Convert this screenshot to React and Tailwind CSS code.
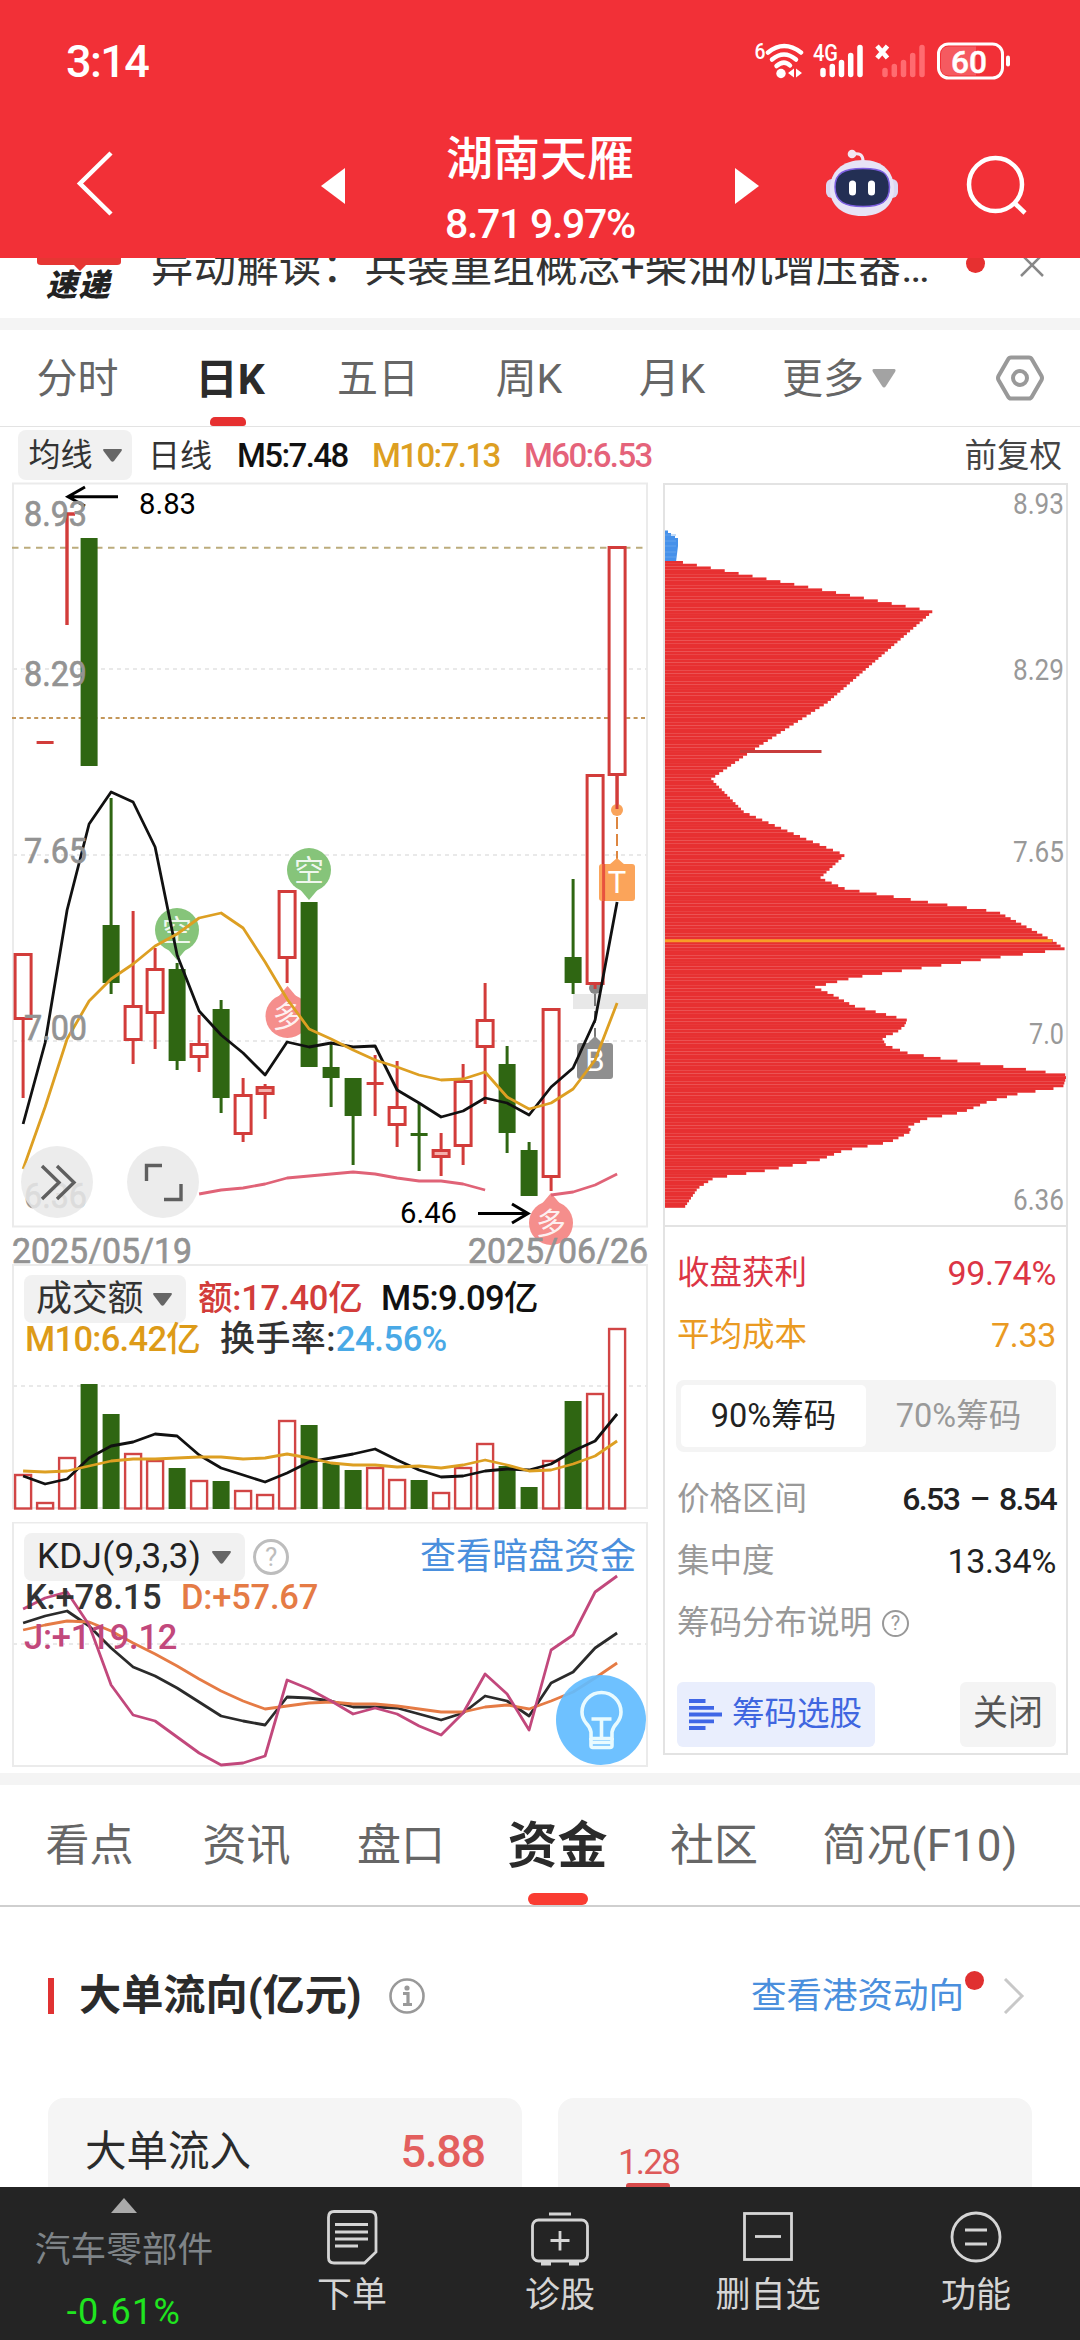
// App.jsx - Stock detail page: K line, volume, KDJ and chip distribution
import React from 'react';

const FONT = "font-[Roboto,'Noto_Sans_CJK_SC',sans-serif]";

// x centre of the n-th trading day
const dayX = (i) => 23.1 + 22 * i;

const toPoints = (values, start = 0) =>
  values.map((y, i) => `${dayX(i + start)},${y}`).join(' ');

// [day, bodyTop, bodyBottom, wickTop, wickBottom, up]
const candles = [
  [0, 954, 1018, 954, 1098, true],
  [1, 741, 744, 741, 744, true],
  [3, 538, 766, 538, 766, false],
  [4, 925, 983, 798, 994, false],
  [5, 1006, 1039, 911, 1064, true],
  [6, 969, 1012, 948, 1049, true],
  [7, 969, 1061, 963, 1070, false],
  [8, 1044, 1056, 1015, 1072, true],
  [9, 1009, 1098, 1000, 1113, false],
  [10, 1095, 1133, 1078, 1142, true],
  [11, 1087, 1093, 1084, 1119, true],
  [12, 891, 957, 891, 983, true],
  [13, 902, 1067, 902, 1067, false],
  [14, 1067, 1078, 1044, 1107, false],
  [15, 1078, 1116, 1078, 1165, false],
  [16, 1082, 1085, 1055, 1116, true],
  [17, 1107, 1124, 1061, 1147, true],
  [18, 1133, 1136, 1103, 1171, false],
  [19, 1150, 1156, 1133, 1176, true],
  [20, 1081, 1145, 1064, 1165, true],
  [21, 1020, 1046, 983, 1104, true],
  [22, 1064, 1133, 1046, 1153, false],
  [23, 1150, 1196, 1142, 1196, false],
  [24, 1009, 1176, 1009, 1191, true],
  [25, 957, 983, 879, 994, false],
  [26, 775, 983, 775, 989, true],
  [27, 547, 774, 547, 810, true],
];

const ma5 = [
  1124, 1043, 910, 824, 792, 802, 847, 955, 1011, 1035, 1053, 1075, 1042, 1047,
  1043, 1047, 1046, 1090, 1103, 1117, 1111, 1098, 1103, 1115, 1087, 1068, 1020, 902,
];
const ma10 = [
  1169, 1107, 1039, 1001, 979, 964, 946, 934, 918, 913, 928, 962, 999, 1029,
  1039, 1050, 1060, 1067, 1075, 1080, 1079, 1072, 1097, 1109, 1103, 1089, 1060, 1003,
];
const ma60Left = [1194, 1190, 1188, 1184, 1178, 1176, 1174, 1172, 1174, 1178, 1181, 1181, 1184, 1190];
const ma60Right = [1195, 1192, 1185, 1174];

// [top, up]
const volumes = [
  [1474, true], [1502, true], [1457, true], [1384, false], [1414, false], [1453, true], [1460, true],
  [1468, false], [1480, true], [1481, false], [1490, true], [1494, true], [1420, true], [1425, false],
  [1463, false], [1470, false], [1467, true], [1479, true], [1480, false], [1492, true], [1467, true],
  [1443, true], [1466, false], [1487, false], [1460, true], [1401, false], [1393, true], [1328, true],
];
const vol5 = [
  1476, 1484, 1479, 1458, 1446, 1442, 1434, 1436, 1455, 1468, 1475, 1482, 1473, 1462,
  1458, 1454, 1449, 1460, 1470, 1477, 1476, 1471, 1469, 1470, 1464, 1451, 1441, 1414,
];
const vol10 = [
  1471, 1472, 1471, 1466, 1461, 1459, 1459, 1458, 1457, 1457, 1459, 1458, 1454, 1458,
  1463, 1465, 1465, 1467, 1466, 1468, 1465, 1460, 1465, 1471, 1470, 1464, 1456, 1441,
];

const kLine = [
  1623, 1616, 1611, 1626, 1648, 1667, 1676, 1688, 1702, 1716, 1721, 1725, 1697, 1698,
  1701, 1707, 1707, 1708, 1714, 1720, 1713, 1696, 1701, 1716, 1683, 1672, 1648, 1633,
];
const dLine = [
  1630, 1625, 1621, 1622, 1631, 1643, 1654, 1666, 1679, 1691, 1701, 1709, 1706, 1703,
  1702, 1704, 1704, 1706, 1709, 1712, 1712, 1707, 1705, 1709, 1701, 1692, 1678, 1663,
];
const jLine = [
  1609, 1598, 1592, 1625, 1685, 1715, 1721, 1737, 1753, 1765, 1763, 1756, 1680, 1689,
  1701, 1714, 1708, 1714, 1726, 1735, 1713, 1674, 1694, 1730, 1650, 1635, 1592, 1576,
];

// outline of the chip distribution as [y, x]
const chipOutline = [
  [561, 676], [611.5, 932.5], [703, 826.7], [748, 756], [779, 711], [812, 744], [839, 806],
  [855, 845], [878, 820], [889, 846], [902, 927], [912, 998], [940, 1052], [949, 1065], [957, 1000],
  [977, 856], [987, 815], [995, 833], [1006, 854], [1020, 907], [1025, 905], [1032, 897],
  [1038, 882], [1045, 886], [1053, 908], [1061, 957], [1069, 1024], [1075, 1067], [1087, 1063],
  [1094, 1017], [1102, 987], [1112, 963], [1119, 925], [1127, 908], [1131, 912], [1142, 890],
  [1150, 845], [1160, 819], [1171, 763], [1178, 714], [1188, 698], [1208, 684],
];

const chipBars = [];
for (let y = 561; y < 1207; y += 2.74) {
  const mid = y + 1.37;
  const n = chipOutline.findIndex((p) => p[0] > mid);
  if (n < 1) continue;
  const [y0, x0] = chipOutline[n - 1];
  const [y1, x1] = chipOutline[n];
  chipBars.push({ y, w: x0 + ((x1 - x0) * (mid - y0)) / (y1 - y0) - 664 });
}

const Line = ({ points, color, width = 2.8 }) => (
  <polyline points={points} fill="none" stroke={color} strokeWidth={width} strokeLinejoin="round" />
);

const Candle = ({ data }) => {
  const [day, top, bottom, wickTop, wickBottom, up] = data;
  const x = dayX(day);
  const flat = bottom - top < 4;
  const color = up ? '#d23c3a' : '#2f6612';
  return (
    <g>
      {wickTop < top && <line x1={x} x2={x} y1={wickTop} y2={top} stroke={color} strokeWidth="3" />}
      {wickBottom > bottom && (
        <line x1={x} x2={x} y1={bottom} y2={wickBottom} stroke={color} strokeWidth="3" />
      )}
      {up && !flat ? (
        <rect
          x={x - 8}
          y={top + 0.5}
          width="16"
          height={bottom - top}
          fill={bottom - top < 8 ? '#f3b0ac' : '#fff'}
          stroke={color}
          strokeWidth="3"
        />
      ) : (
        <rect x={x - 8.5} y={top} width="17" height={bottom - top} fill={color} />
      )}
    </g>
  );
};

const Pin = ({ x, y, label, down }) => (
  <g>
    <g fill={down ? '#86c47a' : '#f58e8c'}>
      <circle cx={x} cy={y} r="22" />
      {down ? (
        <path d={`M${x - 11} ${y + 17}L${x} ${y + 30}L${x + 11} ${y + 17}Z`} />
      ) : (
        <path d={`M${x - 11} ${y - 17}L${x} ${y - 30}L${x + 11} ${y - 17}Z`} />
      )}
    </g>
    <text x={x} y={y + 11} textAnchor="middle" fontSize="30" fill="#fff" fillOpacity="0.9">
      {label}
    </text>
  </g>
);

const KLineChart = () => (
  <svg className="block w-[640px] h-[782px]" viewBox="10 482 640 782">
    <rect x="13" y="483.5" width="634" height="743" fill="none" stroke="#ebebeb" strokeWidth="2" />
    {[669, 855, 1041].map((y) => (
      <line key={y} x1="13" x2="647" y1={y} y2={y} stroke="#e9e9e9" strokeWidth="2" strokeDasharray="4 4" />
    ))}
    <line x1="12" x2="644" y1="547.7" y2="547.7" stroke="#bcac7c" strokeWidth="2" strokeDasharray="6.5 5.5" />
    <line x1="12" x2="648" y1="718" y2="718" stroke="#c4975a" strokeWidth="2" strokeDasharray="4 3.4" />
    <rect x="573" y="994" width="75" height="15" fill="#e8e8e8" />
    <Pin x={177} y={930} label="空" down />
    <Pin x={309} y={870} label="空" down />
    <Pin x={287.5} y={1016} label="多" />
    <Pin x={551} y={1223} label="多" />

    {/* buy mark */}
    <circle cx="595" cy="988" r="6" fill="#888" />
    <path d="M595 994V1038" stroke="#777" strokeWidth="2" strokeDasharray="12 5" />
    <path d="M588 1043L595 1036L602 1043Z" fill="#8f8f8f" />
    <rect x="577" y="1043" width="36" height="36" rx="3" fill="#8f8f8f" />
    <text x="595" y="1071" textAnchor="middle" fontSize="31" fill="#fff">B</text>

    {candles.map((c) => (
      <Candle key={c[0]} data={c} />
    ))}
    <path d="M75 514H67V625" fill="none" stroke="#d23c3a" strokeWidth="3.4" />

    {/* T mark */}
    <circle cx="617" cy="810" r="6" fill="#f9a35a" />
    <path d="M617 774V809" stroke="#d23c3a" strokeWidth="3" />
    <path d="M617 817V860" stroke="#dd8640" strokeWidth="2" strokeDasharray="12 5" />
    <path d="M609 865L617 858L625 865Z" fill="#fba45a" />
    <rect x="599" y="864" width="36" height="37" rx="3" fill="#fba45a" />
    <text x="617" y="893" textAnchor="middle" fontSize="31" fill="#fff">T</text>
    <path d="M603.6 864V901" stroke="#e8523e" strokeWidth="3" />

    <Line points={toPoints(ma60Left, 8)} color="#e06377" />
    <Line points={toPoints(ma60Right, 24)} color="#e06377" />
    <Line points={toPoints(ma5)} color="#111" />
    <Line points={toPoints(ma10)} color="#dd9f22" />

    {/* price extremes */}
    <g fill="none" stroke="#000" strokeWidth="3">
      <path d="M118 496.7H68M85 487L68 496.7L85 506" />
      <path d="M478 1213.5H528M512 1204L528 1213.5L512 1223" />
    </g>
    <g fontSize="30" fill="#000">
      <text x="139" y="514" textLength="57" lengthAdjust="spacingAndGlyphs">8.83</text>
      <text x="400" y="1223" textLength="57" lengthAdjust="spacingAndGlyphs">6.46</text>
    </g>
    <g fontSize="35" fill="#939393" stroke="#939393" strokeWidth="0.7">
      <text x="24" y="526" textLength="63" lengthAdjust="spacingAndGlyphs">8.93</text>
      <text x="24" y="686" textLength="63" lengthAdjust="spacingAndGlyphs">8.29</text>
      <text x="24" y="863" textLength="63" lengthAdjust="spacingAndGlyphs">7.65</text>
      <text x="24" y="1040" textLength="63" lengthAdjust="spacingAndGlyphs">7.00</text>
      <text x="24" y="1208" textLength="63" lengthAdjust="spacingAndGlyphs">6.36</text>
      <text x="12" y="1263" textLength="180" lengthAdjust="spacingAndGlyphs">2025/05/19</text>
      <text x="468" y="1263" textLength="180" lengthAdjust="spacingAndGlyphs">2025/06/26</text>
    </g>

    {/* round buttons */}
    <g fill="#e9e9e9" fillOpacity="0.85">
      <circle cx="57" cy="1182" r="36" />
      <circle cx="163" cy="1182" r="36" />
    </g>
    <g fill="none" stroke="#5f5f5f" strokeWidth="3.4">
      <path d="M42 1166L59 1182.5L42 1199M57 1166L74 1182.5L57 1199" />
      <path d="M146.5 1181V1165.5H162M181 1184V1199.5H164" />
    </g>
  </svg>
);

const ChipChart = () => (
  <svg className="block w-[408px] h-[742px]" viewBox="662 483 408 742">
    <path d="M664 530.5H668V533H671V536H675V538H678V546L676 562H664Z" fill="#4691ea" />
    {[535, 541, 546, 552, 557].map((y) => (
      <line key={y} x1="664" x2="676" y1={y} y2={y} stroke="#6aa7ee" strokeWidth="0.8" />
    ))}
    {chipBars.map((b) => (
      <rect key={b.y} x="664" y={b.y} width={b.w} height="2.9" fill="#e73031" />
    ))}
    <line x1="740" x2="821.5" y1="751.5" y2="751.5" stroke="#c83c3c" strokeWidth="2.8" />
    <line x1="664" x2="1052" y1="940.7" y2="940.7" stroke="#f79d27" strokeWidth="3" />
    <g fontSize="29" fill="#999">
      <text x="1013" y="514" textLength="51" lengthAdjust="spacingAndGlyphs">8.93</text>
      <text x="1013" y="680" textLength="51" lengthAdjust="spacingAndGlyphs">8.29</text>
      <text x="1013" y="862" textLength="51" lengthAdjust="spacingAndGlyphs">7.65</text>
      <text x="1029" y="1044" textLength="35" lengthAdjust="spacingAndGlyphs">7.0</text>
      <text x="1013" y="1210" textLength="51" lengthAdjust="spacingAndGlyphs">6.36</text>
    </g>
  </svg>
);

const Triangle = () => (
  <svg className="w-[19px] h-[13px]" viewBox="0 0 19 13">
    <path d="M1 0H18Q19.5 0 18.5 2L11 12Q9.5 13.5 8 12L0.5 2Q-0.5 0 1 0Z" fill="#666" />
  </svg>
);

const StatusBar = () => (
  <div className="h-[120px] flex items-center justify-between pl-[66px] pr-[69px] pt-[2px]">
    <span className="text-[45px] leading-none font-medium tracking-[-1.6px]">3:14</span>
    <svg className="w-[258px] h-[42px]" viewBox="752 38.5 258 42" fill="none">
      <text x="753.5" y="57" fontSize="22" fontWeight="500" fill="#fff" textLength="11" lengthAdjust="spacingAndGlyphs">6</text>
      <g stroke="#fff" strokeWidth="4.5" strokeLinecap="round">
        <path d="M767 51Q783 38 800 51" />
        <path d="M771 58Q783 48 795 58" />
        <path d="M775.5 64.5Q783 58 789 64" />
      </g>
      <circle cx="780" cy="72" r="4.7" fill="#fff" />
      <path d="M793 67V76L787 71.5ZM795 67V76L801 71.5Z" fill="#fff" />
      <text x="812" y="59" fontSize="23" fontWeight="500" fill="#fff" textLength="25" lengthAdjust="spacingAndGlyphs">4G</text>
      <g stroke="#fff" strokeWidth="5.5" strokeLinecap="round">
        <path d="M822 69V73M831.3 65V73M840.5 61V73M849.7 54V73M859 46V73" />
      </g>
      <path d="M876 44.5L886.5 56.5M886.5 44.5L876 56.5" stroke="#fff" strokeWidth="4.6" />
      <g stroke="#ff6b70" strokeWidth="5.5" strokeLinecap="round">
        <path d="M884 69V73M893.3 65V73M902.5 61V73M911.7 54V73M921 46V73" />
      </g>
      <rect x="937.5" y="42.5" width="64" height="34" rx="10" stroke="#fff" strokeWidth="3" />
      <path d="M948 45H975V74H948Q940 74 940 66V53Q940 45 948 45Z" fill="#f55a60" />
      <text x="950" y="71" fontSize="32" fontWeight="500" fill="#fff" stroke="#fff" strokeWidth="0.5" textLength="36" lengthAdjust="spacingAndGlyphs">60</text>
      <path d="M1007 56V63" stroke="#fff" strokeWidth="4" strokeLinecap="round" />
    </svg>
  </div>
);

const RobotIcon = () => (
  <svg className="w-[74px] h-[70px]" viewBox="824 148 74 70">
    <path d="M852 154Q862 152 862 161" fill="none" stroke="#f3e6f2" strokeWidth="3" />
    <circle cx="851" cy="154" r="4.3" fill="#f3e6f2" />
    <rect x="825" y="179" width="12" height="19" rx="6" fill="#dcd8f2" />
    <rect x="885" y="179" width="12" height="19" rx="6" fill="#dcd8f2" />
    <path d="M862 160C882 160 893 172 893 189C893 206 880 216 861 216C842 216 829 206 829 189C829 172 841 160 862 160Z" fill="#e7e3f6" />
    <path d="M862 168.5C882 168.5 888 173 888.5 187C888.5 202 880 206.5 862 206.5C844 206.5 834 202 834 187C834 173 843 168.5 862 168.5Z" fill="#232f54" stroke="#7d5fe0" strokeWidth="1.5" />
    <rect x="848" y="180.5" width="7" height="15" rx="3.5" fill="#fff" />
    <rect x="867" y="180.5" width="7" height="15" rx="3.5" fill="#fff" />
  </svg>
);

const Header = () => (
  <header className="h-[258px] bg-[#f23037] text-white">
    <StatusBar />
    <div className="h-[138px] flex items-start">
      <svg className="w-[40px] h-[66px] mt-[30px] ml-[75px]" viewBox="0 0 40 66">
        <path d="M36 3L5 33.5L36 64" fill="none" stroke="#fff" strokeWidth="4.5" />
      </svg>
      <svg className="w-[24px] h-[36px] mt-[48px] ml-[206px]" viewBox="0 0 24 36">
        <path d="M24 0V36L0 18Z" fill="#fff" />
      </svg>
      <div className="w-[390px] flex flex-col items-center">
        <h1 className="text-[47px] leading-[54px] mt-[12px] font-medium">湖南天雁</h1>
        <p className="text-[41px] leading-[48px] mt-[14px] font-medium tracking-[-1.3px]">8.71 9.97%</p>
      </div>
      <svg className="w-[24px] h-[36px] mt-[48px]" viewBox="0 0 24 36">
        <path d="M0 0V36L24 18Z" fill="#fff" />
      </svg>
      <div className="mt-[28px] ml-[66px]">
        <RobotIcon />
      </div>
      <svg className="w-[62px] h-[62px] mt-[35px] ml-[66px]" viewBox="964 155 62 62">
        <circle cx="994.5" cy="184.5" r="26.5" fill="none" stroke="#fff" strokeWidth="4.5" />
        <path d="M1013.5 203L1024 213" stroke="#fff" strokeWidth="4.5" />
      </svg>
    </div>
  </header>
);

const NewsStrip = () => (
  <div className="h-[60px] flex overflow-hidden bg-white">
    <div className="ml-[37px] w-[84px]">
      <svg className="block w-[84px] h-[13px]" viewBox="0 0 84 13">
        <path d="M0 0H84V4Q84 7 80 7H49L43 13L37 7H4Q0 7 0 4Z" fill="#e63633" />
      </svg>
      <p className="-mt-[1px] pl-[9px] text-[31px] leading-[32px] font-black italic text-[#222] tracking-[1.5px]">速递</p>
    </div>
    <p className="-mt-[20px] ml-[30px] w-[784px] h-[60px] text-[42.3px] leading-[60px] text-[#333] tracking-[0.4px] whitespace-nowrap">
      异动解读：兵装重组概念+柴油机增压器…
    </p>
    <div className="size-[19px] rounded-full bg-[#e63030] -mt-[4px] ml-[31px]" />
    <svg className="w-[24px] h-[24px] ml-[35px] -mt-[5px]" viewBox="0 0 24 24">
      <path d="M1 1L23 23M23 1L1 23" stroke="#888" strokeWidth="2.5" />
    </svg>
  </div>
);

const PeriodTabs = () => (
  <nav className="h-[97px] grid grid-cols-[155px_150px_146px_156px_130px_204px_1fr] items-center text-[41px] text-[#666] border-b border-[#e3e3e3] bg-white">
    <span className="pt-[4px] text-center">分时</span>
    <span className="relative h-full pt-[4px] flex items-center justify-center text-[42.5px] font-bold text-[#2b2b2b]">
      日K
      <i className="absolute bottom-0 left-[55px] w-[36px] h-[9px] rounded-t-[5px] rounded-b-[3px] bg-[#e63030]" />
    </span>
    <span className="pt-[4px] text-center">五日</span>
    <span className="pt-[4px] text-center">周K</span>
    <span className="pt-[4px] text-center">月K</span>
    <span className="pt-[4px] flex items-center justify-center gap-[8px]">
      更多
      <svg className="w-[24px] h-[19px] -mt-[4px]" viewBox="0 0 24 19">
        <path d="M2 0H22Q24.5 0 23 3L14 17Q12 20 10 17L1 3Q-0.5 0 2 0Z" fill="#a3a3a3" />
      </svg>
    </span>
    <svg className="w-[50px] h-[48px] ml-[54px]" viewBox="0 0 50 48" fill="none" stroke="#999">
      <path d="M16 3.5H34Q36 3.5 37 5.5L46.5 22Q47.5 24 46.5 26L37 42.5Q36 44.5 34 44.5H16Q14 44.5 13 42.5L3.5 26Q2.5 24 3.5 22L13 5.5Q14 3.5 16 3.5Z" strokeWidth="4" />
      <circle cx="25" cy="24" r="7" strokeWidth="4" />
    </svg>
  </nav>
);

const AverageRow = () => (
  <div className="h-[56px] flex items-start pt-[3px] leading-[52px] text-[33px] font-medium tracking-[-1.6px]">
    <button className="ml-[18px] w-[114px] h-[50px] rounded-lg bg-[#f1f1f1] flex items-center justify-center gap-[10px] text-[32px] font-normal text-[#333] tracking-normal">
      均线 <Triangle />
    </button>
    <span className="ml-[16px] w-[89px] text-[32px] text-[#333] font-normal tracking-normal">日线</span>
    <span className="w-[135px] text-[#111]">M5:7.48</span>
    <span className="w-[152px] text-[#dd9f22]">M10:7.13</span>
    <span className="w-[140px] text-[#e5637a]">M60:6.53</span>
    <span className="ml-auto mr-[18px] text-[32.5px] font-normal text-[#444] tracking-normal">前复权</span>
  </div>
);

const VolumePanel = () => (
  <div className="relative w-[640px] h-[246px]">
    <svg className="absolute inset-0 w-[640px] h-[246px]" viewBox="10 1264 640 246">
      <rect x="13" y="1265" width="634" height="243" fill="none" stroke="#ebebeb" strokeWidth="2" />
      <line x1="13" x2="647" y1="1386" y2="1386" stroke="#e9e9e9" strokeWidth="2" strokeDasharray="4 4" />
      {volumes.map(([top, up], i) =>
        up ? (
          <rect key={i} x={dayX(i) - 8} y={top + 1} width="16" height={1507.5 - top} fill="#fff" stroke="#d14545" strokeWidth="2.4" />
        ) : (
          <rect key={i} x={dayX(i) - 8.5} y={top} width="17" height={1509 - top} fill="#2f6612" />
        )
      )}
      <Line points={toPoints(vol5)} color="#111" />
      <Line points={toPoints(vol10)} color="#dd9f22" />
    </svg>
    <div className="relative pt-[11px] text-[34.5px] font-medium whitespace-nowrap">
      <div className="flex items-center h-[48px]">
        <button className="ml-[14px] w-[162px] h-[48px] rounded-lg bg-[#f1f1f1] flex items-center pl-[12px] gap-[10px] text-[36px] font-normal text-[#333] tracking-[-0.2px]">
          成交额 <Triangle />
        </button>
        <span className="ml-[12px] w-[183px] text-[#d23c3a] tracking-[-0.2px]">额:17.40亿</span>
        <span className="text-[#111] tracking-[-0.6px]">M5:9.09亿</span>
      </div>
      <div className="-mt-[1px] flex items-center h-[36px] pl-[15px]">
        <span className="w-[195px] text-[#dd9b18] tracking-[-0.7px]">M10:6.42亿</span>
        <span className="text-[#333] text-[35px] tracking-[0.4px]">换手率:</span>
        <span className="text-[#49a9e6] tracking-[-0.4px]">24.56%</span>
      </div>
    </div>
  </div>
);

const KdjPanel = () => (
  <div className="relative w-[640px] h-[246px] mt-[12px]">
    <svg className="absolute inset-0 w-[640px] h-[246px]" viewBox="10 1522 640 246">
      <rect x="13" y="1522.5" width="634" height="243.5" fill="none" stroke="#ebebeb" strokeWidth="2" />
      <line x1="13" x2="647" y1="1644" y2="1644" stroke="#e9e9e9" strokeWidth="2" strokeDasharray="4 4" />
      <Line points={toPoints(kLine)} color="#2b2b2b" />
      <Line points={toPoints(dLine)} color="#e57b45" />
      <Line points={toPoints(jLine)} color="#c2487c" />
    </svg>
    <div className="relative pt-[11px] text-[34.5px] font-medium tracking-[-0.2px] whitespace-nowrap">
      <div className="flex items-center h-[48px]">
        <button className="ml-[14px] w-[221px] h-[48px] rounded-lg bg-[#f1f1f1] flex items-center pl-[13px] gap-[11px] text-[35px] font-normal text-[#222] tracking-[0.3px]">
          KDJ(9,3,3) <Triangle />
        </button>
        <span className="ml-[8px] size-[36px] rounded-full border-[3px] border-[#bdbdbd] text-[#bdbdbd] text-[26px] font-normal flex items-center justify-center">?</span>
        <span className="ml-auto mr-[14px] text-[36px] font-normal text-[#4a8fdd] tracking-normal">查看暗盘资金</span>
      </div>
      <div className="-mt-[1px] h-[40px] leading-[34px] pl-[15px] flex">
        <span className="w-[156px] text-[#333]">K:+78.15</span>
        <span className="text-[#e57b45]">D:+57.67</span>
      </div>
      <p className="h-[40px] leading-[34px] pl-[14px] text-[#c2487c]">J:+119.12</p>
    </div>
    <svg className="absolute left-[546px] top-[153px] size-[90px]" viewBox="0 0 90 90" fill="none">
      <circle cx="45" cy="45" r="45" fill="#62bcff" fillOpacity="0.92" />
      <g stroke="#e9fbff" strokeWidth="3.6">
        <path d="M35 63.5V57Q34 52 30 48Q26 43 26 37A19.5 19.5 0 0 1 65 37Q65 43 61 48Q57 52 56 57V63.5Z" />
        <path d="M35 63V70.5Q35 72.5 37 72.5H54Q56 72.5 56 70.5V63M35 67.5H56" />
        <path d="M35.5 44H55.5M45.5 44V63" />
      </g>
    </svg>
  </div>
);

const chipStats = [
  { label: '收盘获利', value: '99.74%', color: 'text-[#dc3545]' },
  { label: '平均成本', value: '7.33', color: 'text-[#ea9a22]' },
];

const ChipPanel = () => (
  <aside className="ml-auto mr-[12px] w-[405px] h-[1272px] border-2 border-[#e3e3e3] text-[32.5px]">
    <div className="h-[742px] border-b-2 border-[#e3e3e3] overflow-hidden">
      <div className="-ml-[3px] -mt-[2px]">
        <ChipChart />
      </div>
    </div>
    <div className="pl-[12px] pr-[10px] pt-[15px]">
      {chipStats.map((s) => (
        <div key={s.label} className={`h-[62px] flex items-center justify-between ${s.color}`}>
          <span>{s.label}</span>
          <span className="text-[34px] tracking-[-0.3px]">{s.value}</span>
        </div>
      ))}
      <div className="mt-[14px] -ml-[1px] h-[72px] rounded-[8px] bg-[#f4f4f4] p-[5px] flex text-[32.5px]">
        <span className="w-[185px] rounded-[5px] bg-white text-[#222] flex items-center justify-center pt-[1px]">90%筹码</span>
        <span className="flex-1 text-[#999] flex items-center justify-center pt-[1px]">70%筹码</span>
      </div>
      <div className="mt-[16px] h-[62px] flex items-center justify-between">
        <span className="text-[#999]">价格区间</span>
        <span className="text-[#222] font-medium text-[32px] tracking-[-1.6px] [word-spacing:4px]">6.53 – 8.54</span>
      </div>
      <div className="h-[62px] flex items-center justify-between">
        <span className="text-[#999]">集中度</span>
        <span className="text-[#222] text-[34px] tracking-[-0.3px]">13.34%</span>
      </div>
      <div className="h-[62px] flex items-center text-[#999]">
        筹码分布说明
        <span className="ml-[10px] size-[27px] rounded-full border-2 border-[#999] text-[20px] flex items-center justify-center">?</span>
      </div>
      <div className="mt-[28px] h-[65px] flex justify-between">
        <button className="w-[198px] rounded-[6px] bg-[#e9eefd] text-[#3f66e0] flex items-center pl-[12px] gap-[10px]">
          <svg className="w-[33px] h-[31px]" viewBox="0 0 33 31">
            <path d="M0 2H16.5M0 8.8H25M0 15.5H33M0 22.3H25M0 29H16.5" stroke="#3f66e6" strokeWidth="3.8" />
          </svg>
          筹码选股
        </button>
        <button className="w-[96px] rounded-[6px] bg-[#f4f4f4] text-[#555] text-[35px]">关闭</button>
      </div>
    </div>
  </aside>
);

const SectionTabs = () => (
  <nav className="h-[122px] grid grid-cols-[179px_135px_174px_139px_174px_238px] items-center text-center text-[44px] text-[#666] border-b-2 border-[#cfcfcf] bg-white">
    <span className="pt-[2px]">看点</span>
    <span className="pt-[2px]">资讯</span>
    <span className="pt-[2px]">盘口</span>
    <span className="relative h-full pt-[2px] flex items-center justify-center text-[50px] font-bold text-[#2b2b2b]">
      资金
      <i className="absolute bottom-0 left-[40px] w-[60px] h-[12px] rounded-[6px] bg-[#fa3c32]" />
    </span>
    <span className="pt-[2px]">社区</span>
    <span className="pt-[2px] whitespace-nowrap tracking-[0.5px]">简况(F10)</span>
  </nav>
);

const FundFlow = () => (
  <section className="h-[280px] bg-white overflow-hidden">
    <div className="h-[60px] mt-[59px] pl-[48px] flex items-center">
      <i className="w-[6px] h-[36px] bg-[#e03232]" />
      <h2 className="ml-[25px] text-[42.2px] leading-none font-bold text-[#2b2b2b]">大单流向(亿元)</h2>
      <svg className="ml-[27px] size-[36px]" viewBox="0 0 36 36" fill="none" stroke="#999">
        <circle cx="18" cy="18" r="16.5" strokeWidth="2.6" />
        <path d="M14 15.5H19V26M14 26.5H23" strokeWidth="3.2" />
        <circle cx="18" cy="10" r="1.3" strokeWidth="2.6" />
      </svg>
      <span className="ml-auto pt-[2px] text-[35.5px] text-[#4a8fdd]">查看港资动向</span>
      <i className="size-[19px] rounded-full bg-[#e03030] -mt-[32px] ml-[1px]" />
      <svg className="w-[22px] h-[36px] ml-[19px] mr-[55px]" viewBox="0 0 22 36">
        <path d="M2 1L19 18L2 35" fill="none" stroke="#c8c8c8" strokeWidth="3" />
      </svg>
    </div>
    <div className="mt-[72px] mx-[48px] h-[100px] grid grid-cols-2 gap-[36px]">
      <div className="rounded-t-[16px] bg-[#f5f5f5] flex justify-between pl-[37px] pr-[37px] leading-[107px]">
        <span className="text-[41.5px] text-[#2b2b2b]">大单流入</span>
        <span className="text-[45px] font-medium text-[#e35f5e] tracking-[-1.2px]">5.88</span>
      </div>
      <div className="rounded-t-[16px] bg-[#f5f5f5] pl-[60px] pt-[45px] text-[35px] leading-[40px] text-[#de5a5a] tracking-[-1.8px]">
        1.28
        <i className="block ml-[8px] w-[44px] h-[10px] rounded-[3px] bg-[#d84a4a]" />
      </div>
    </div>
  </section>
);

const actions = [
  {
    label: '下单',
    icon: (
      <>
        <path d="M9 2.5H45Q51 2.5 51 8.5V43L39.5 54H9Q3.5 54 3.5 48.5V8.5Q3.5 2.5 9 2.5Z" />
        <path d="M10 15.5H43M10 23H43M10 30H43M10 37H33" />
      </>
    ),
  },
  {
    label: '诊股',
    icon: (
      <>
        <rect x="-0.5" y="11" width="55" height="41" rx="6" />
        <path d="M16 5H38M17.5 31.5H36.5M27 22V41.5" />
        <path d="M8 54.5H18M36 54.5H46" strokeWidth="4" />
      </>
    ),
  },
  {
    label: '删自选',
    icon: (
      <>
        <rect x="3.5" y="4.5" width="47" height="46" />
        <path d="M14 27.5H40" />
      </>
    ),
  },
  {
    label: '功能',
    icon: (
      <>
        <circle cx="27" cy="28" r="24" />
        <path d="M16 21H38M16 35H38" />
      </>
    ),
  },
];

const BottomBar = () => (
  <footer className="h-[153px] bg-[#242424] grid grid-cols-[248px_208px_208px_208px_208px] text-[#d5d5d5]">
    <div className="flex flex-col items-center pt-[11px]">
      <svg className="w-[26px] h-[15px]" viewBox="0 0 26 15">
        <path d="M0 15L13 0L26 15Z" fill="#aaa" />
      </svg>
      <span className="mt-[14px] text-[35.7px] leading-[46px] text-[#7f8488]">汽车零部件</span>
      <span className="mt-[16px] text-[36px] leading-[46px] text-[#1fe51f] tracking-[1.3px]">-0.61%</span>
    </div>
    {actions.map((a) => (
      <div key={a.label} className="flex flex-col items-center pt-[22px]">
        <svg className="w-[54px] h-[58px] overflow-visible" viewBox="0 0 54 58" fill="none" stroke="#d5d5d5" strokeWidth="2.8">
          {a.icon}
        </svg>
        <span className="mt-[4px] text-[35px] leading-[50px]">{a.label}</span>
      </div>
    ))}
  </footer>
);

export default function App() {
  return (
    <div className={`w-[1080px] h-[2340px] overflow-hidden bg-white ${FONT}`}>
      <Header />
      <NewsStrip />
      <div className="h-[12px] bg-[#f4f4f4]" />
      <PeriodTabs />
      <AverageRow />
      <main className="h-[1290px] flex items-start">
        <div className="ml-[10px] w-[640px] -mt-[1px]">
          <KLineChart />
          <VolumePanel />
          <KdjPanel />
        </div>
        <ChipPanel />
      </main>
      <div className="h-[12px] bg-[#f4f4f4]" />
      <SectionTabs />
      <FundFlow />
      <BottomBar />
    </div>
  );
}
